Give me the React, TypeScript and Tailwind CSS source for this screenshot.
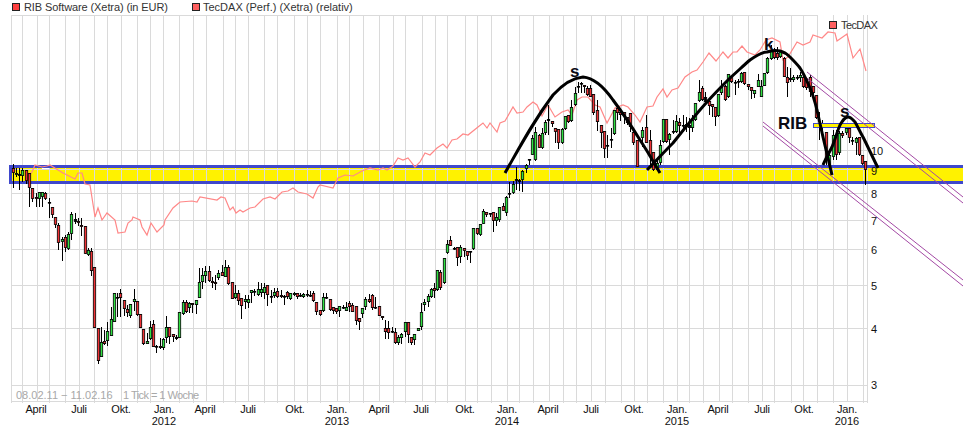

type C = [number, number, number, number, number, string];

const candles: C[] = [
  [13,168,173,164,188,"r"],[16,173,175,168,177,"g"],[19,174,176,168,190,"k"],[22,170,176,168,182,"g"],[26,170,181,170,184,"r"],[29,173,188,173,207,"r"],[32,188,199,188,202,"r"],[36,197,199,193,207,"r"],[39,192,199,192,207,"g"],[42,192,197,192,207,"g"],[45,193,199,192,200,"r"],[49,202,203,198,218,"k"],[52,207,215,207,218,"r"],[55,217,225,217,228,"r"],[58,225,243,223,250,"r"],[62,239,242,237,261,"g"],[65,237,248,235,252,"r"],[68,234,249,232,250,"g"],[71,214,234,212,240,"g"],[75,219,222,213,224,"k"],[78,221,223,218,226,"r"],[81,225,227,218,236,"r"],[85,226,254,226,254,"r"],[88,250,255,248,256,"g"],[91,251,271,248,276,"r"],[94,267,328,267,328,"r"],[98,328,361,328,364,"r"],[101,342,357,327,357,"g"],[104,341,344,330,345,"r"],[107,331,341,322,346,"g"],[111,319,336,307,336,"g"],[114,293,322,293,322,"g"],[117,297,298,293,317,"k"],[120,293,298,289,317,"r"],[124,300,309,300,316,"r"],[127,309,313,305,317,"r"],[130,304,316,304,318,"g"],[134,299,302,289,311,"g"],[137,301,315,301,316,"r"],[140,314,328,314,328,"r"],[143,329,344,329,345,"r"],[147,341,344,333,344,"g"],[150,327,339,321,340,"g"],[153,324,347,320,347,"r"],[156,346,347,345,353,"k"],[160,346,348,338,349,"r"],[163,339,348,338,350,"g"],[166,327,338,316,343,"g"],[169,327,337,327,344,"r"],[173,334,337,334,342,"r"],[176,337,339,335,340,"k"],[179,312,338,312,338,"g"],[183,302,314,300,315,"g"],[186,302,312,300,313,"r"],[189,303,308,302,313,"g"],[192,303,305,303,313,"r"],[196,300,305,300,314,"g"],[199,282,298,268,298,"g"],[202,275,282,268,289,"g"],[205,271,276,266,283,"g"],[209,271,281,266,282,"r"],[212,281,283,277,288,"r"],[215,282,284,275,290,"r"],[218,273,278,270,280,"g"],[222,272,276,265,276,"r"],[225,267,277,260,277,"g"],[228,267,284,265,285,"r"],[232,282,299,282,299,"r"],[235,293,298,285,299,"g"],[238,293,301,290,305,"r"],[241,298,306,298,319,"r"],[245,299,302,295,309,"g"],[248,299,303,295,308,"g"],[251,290,293,290,303,"g"],[254,291,292,289,296,"k"],[258,289,295,282,296,"g"],[261,289,293,283,297,"g"],[264,287,293,283,299,"g"],[267,285,295,285,306,"r"],[271,296,297,290,303,"k"],[274,292,296,288,298,"g"],[277,291,297,288,298,"r"],[281,295,297,290,298,"r"],[284,296,297,295,305,"k"],[287,292,297,291,299,"r"],[290,293,299,293,300,"g"],[294,293,295,292,296,"g"],[297,293,297,293,299,"r"],[300,295,296,293,297,"k"],[303,294,297,293,298,"g"],[307,294,295,290,297,"k"],[310,295,296,291,297,"k"],[313,293,301,291,302,"r"],[316,302,312,302,315,"r"],[320,310,315,310,316,"r"],
  [323,297,311,293,312,"g"],[326,297,298,293,299,"k"],[330,299,310,299,311,"r"],[333,307,311,307,314,"r"],[336,308,312,308,314,"r"],[339,306,311,306,317,"g"],[343,307,308,305,309,"k"],[346,307,311,302,311,"g"],[349,303,307,301,312,"r"],[352,305,312,303,312,"r"],[356,306,321,306,325,"r"],[359,318,322,318,330,"r"],[362,308,314,308,318,"g"],[365,299,307,297,310,"g"],[369,299,302,294,303,"r"],[372,295,308,294,310,"r"],[375,307,308,297,309,"k"],[379,306,316,306,316,"r"],[382,316,318,316,320,"r"],[385,328,332,320,339,"r"],[388,328,333,321,339,"r"],[392,331,332,327,333,"k"],[395,332,343,328,344,"r"],[398,337,343,335,345,"g"],[401,334,338,333,344,"g"],[405,322,332,322,337,"g"],[408,322,335,322,343,"r"],[411,337,343,337,345,"r"],[414,334,340,334,345,"g"],[418,328,331,328,331,"g"],[421,312,327,303,330,"g"],[424,302,305,299,311,"g"],[428,296,302,294,307,"g"],[431,289,297,288,298,"g"],[434,288,291,283,298,"r"],[437,270,290,270,291,"g"],[440,272,288,270,290,"r"],[444,258,283,258,284,"g"],
  [447,244,253,240,254,"g"],[450,240,246,236,246,"r"],[454,248,249,247,250,"k"],[457,247,258,247,266,"r"],[460,247,257,245,263,"g"],[464,248,251,248,257,"r"],[467,251,256,251,260,"r"],[470,251,252,251,263,"k"],[473,228,249,228,250,"g"],[477,228,234,228,235,"r"],[480,224,235,224,236,"g"],[483,211,224,209,224,"g"],[486,212,215,212,217,"r"],[490,213,214,213,217,"k"],[493,212,221,212,232,"r"],[496,217,221,213,226,"g"],[499,207,220,207,222,"g"],[503,206,211,203,211,"r"],[506,197,213,196,216,"g"],[509,193,194,182,198,"k"],[513,184,193,181,194,"g"],[516,179,181,167,190,"k"],[519,180,182,179,191,"k"],[522,171,180,170,192,"g"],[526,165,169,164,173,"g"],[529,159,160,159,165,"k"],[532,138,155,135,155,"g"],[535,132,160,127,161,"g"],[539,135,148,134,148,"r"],[542,133,148,128,149,"g"],[545,122,133,120,135,"g"],[548,119,121,105,135,"k"],[552,121,124,121,127,"r"],[555,128,132,128,143,"r"],[558,129,143,129,149,"r"],[562,129,143,128,144,"g"],[565,116,129,116,130,"g"],[568,115,122,115,123,"r"],[571,107,121,100,122,"g"],[575,93,105,87,106,"g"],[578,86,87,82,93,"k"],[581,83,84,82,93,"k"],[584,85,87,85,93,"r"],[587,88,95,86,96,"r"],[590,88,97,85,97,"r"],[593,94,113,94,115,"r"],[597,110,122,100,131,"r"],[601,125,133,125,148,"r"],[604,131,149,131,158,"r"],[607,145,146,135,158,"k"],[611,139,140,128,148,"k"],[614,110,134,110,135,"g"],[617,108,113,105,120,"r"],[620,112,115,112,121,"r"],[624,112,116,112,124,"r"],[627,117,123,117,125,"r"],[630,113,127,113,132,"r"],[633,132,143,132,145,"r"],[637,140,167,140,167,"r"],
  [642,130,138,127,147,"g"],[646,127,143,115,143,"r"],[650,140,157,130,167,"r"],[653,152,170,152,171,"r"],[657,163,170,160,171,"g"],[660,145,163,140,165,"g"],[663,119,142,119,143,"g"],[666,119,142,119,143,"r"],[669,134,140,133,155,"g"],[673,131,132,120,134,"k"],[676,121,132,115,133,"g"],[679,122,126,118,135,"r"],[683,125,126,115,132,"k"],[686,124,127,117,132,"g"],[689,125,128,118,140,"k"],[692,120,128,115,132,"g"],[695,103,120,103,121,"g"],[699,92,101,80,102,"g"],[702,88,100,86,101,"r"],[705,97,102,92,103,"k"],[709,101,106,101,115,"r"],[712,104,107,104,117,"r"],[715,107,117,107,126,"r"],[718,94,116,94,117,"g"],[721,87,93,80,95,"g"],[725,86,100,85,101,"r"],[728,74,97,74,98,"g"],[731,76,82,76,83,"r"],[735,82,83,80,95,"k"],[738,81,82,79,88,"k"],[741,73,82,72,83,"g"],[744,72,84,72,85,"r"],[748,84,87,84,90,"r"],[751,87,91,87,99,"r"],[754,90,94,90,98,"g"],[758,80,87,74,87,"g"],[761,86,97,80,97,"g"],[764,73,86,73,86,"g"],[767,58,73,57,74,"g"],[771,50,59,45,60,"g"],[774,50,58,48,59,"r"],[777,53,58,47,60,"r"],[780,50,57,50,58,"g"],[784,58,77,57,77,"r"],[787,77,83,67,97,"r"],[790,78,80,68,82,"k"],[793,77,80,75,82,"g"],[797,77,78,75,80,"k"],[800,75,78,72,82,"g"],[803,77,87,75,88,"r"],[806,78,88,78,90,"r"],[810,77,92,75,97,"r"],[813,86,93,86,100,"r"],[816,95,118,95,119,"r"],[819,123,128,112,140,"r"],[822,123,128,120,130,"r"],[826,132,160,132,165,"r"],[829,155,165,150,168,"g"],[833,135,157,130,160,"g"],[836,135,155,130,160,"r"],[839,133,153,131,155,"g"],[842,133,136,131,138,"r"],[846,128,133,123,135,"g"],[849,128,138,128,143,"r"],[852,140,141,137,145,"k"],[856,138,143,137,155,"g"],[859,137,155,137,156,"r"],[862,155,164,155,165,"r"],[865,161,170,161,185,"r"],
];

const tec =
  "29,175 32,172 35,165 42,167 47,166 50,165 58,170 63,173 67,175 75,179 78,173 82,173 85,184 90,185 95,217 98,208 102,220 107,213 115,220 118,233 125,232 128,223 132,220 133,217 140,220 142,227 147,235 151,223 157,232 164,225 165,220 173,208 180,202 192,201 197,202 200,197 217,200 221,197 225,198 230,210 233,207 236,213 240,210 243,212 250,208 255,207 263,199 270,197 275,199 282,192 288,191 293,188 298,192 307,194 313,198 318,187 320,185 333,188 338,178 345,175 353,176 362,171 370,168 378,170 383,168 387,170 393,166 398,158 403,160 408,158 415,167 420,162 425,153 430,155 437,148 443,144 447,148 452,140 457,139 463,134 468,135 478,127 483,123 487,128 490,123 497,132 500,123 505,121 513,107 517,113 523,112 527,107 533,102 537,105 542,116 548,105 555,117 562,112 568,110 572,115 577,100 582,97 588,97 595,105 600,107 607,123 615,108 623,105 628,107 635,115 640,122 647,107 653,106 657,97 663,89 667,97 672,90 678,88 685,77 692,72 697,70 703,62 709,53 716,61 723,52 728,58 733,52 737,52 742,46 747,52 755,55 760,50 766,40 772,38 780,42 783,60 788,57 797,42 803,45 810,42 813,35 822,38 828,32 835,33 837,41 847,34 853,58 860,49 866,71";

const gridX = [11,22,37,49,65,79,94,107,121,137,150,163,179,193,206,223,235,248,264,277,294,307,320,337,349,363,379,393,405,422,435,447,465,477,491,507,519,533,549,563,576,591,605,621,634,647,663,677,689,703,719,732,748,762,774,791,803,817,833,847,863,867];
const labelled = [37,79,121,163,206,248,294,337,379,422,465,507,549,591,634,677,719,762,803,847];
const gridY = [15,150,169,193,220,249,285,328,385,401];

const months: [number, string][] = [[36,"April"],[79,"Juli"],[121,"Okt."],[164,"Jan."],[205,"April"],[248,"Juli"],[295,"Okt."],[337,"Jan."],[379,"April"],[421,"Juli"],[465,"Okt."],[507,"Jan."],[548,"April"],[591,"Juli"],[634,"Okt."],[677,"Jan."],[718,"April"],[762,"Juli"],[804,"Okt."],[847,"Jan."]];
const years: [number, string][] = [[164,"2012"],[337,"2013"],[507,"2014"],[677,"2015"],[847,"2016"]];
const prices: [number, string][] = [[155,"10"],[175,"9"],[198,"8"],[225,"7"],[254,"6"],[290,"5"],[333,"4"],[389,"3"]];

const arches = [
  "M505 173 C522 143 533 122 553 95 C563 84 572 78 583 77 C596 78 606 90 613 100 C622 112 632 127 640 140 C648 152 654 163 660 173",
  "M647 170 C655 162 664 152 673 143 C685 128 696 114 707 102 C715 93 722 86 730 78 C738 71 744 65 750 60 C757 55 762 52 767 52 C772 50 776 50 780 51 C784 52 787 54 790 57 C794 61 797 64 800 68 C804 74 807 81 810 88 C813 95 815 102 817 110 C819 119 821 128 823 137 C826 150 829 162 832 175",
  "M823 165 C826 158 829 153 832 147 C835 140 837 132 840 125 C843 120 845 117 848 117 C851 117 853 120 855 122 C858 127 860 132 863 137 C868 147 873 158 878 168",
];

function Candle({ c }: { c: C }) {
  const [x, t, b, wt, wb, k] = c;
  const cx = Math.floor(x) + 0.5;
  const fill = k === "r" ? "#f03236" : k === "g" ? "#2fe042" : "#000000";
  return (
    <g>
      <line x1={cx} x2={cx} y1={wt} y2={wb} stroke="#000" strokeWidth={1} shapeRendering="crispEdges" />
      <rect x={cx - 1.2} y={t + 0.4} width={2.4} height={Math.max(b - t - 0.8, 0.8)} fill={fill} stroke="#000" strokeWidth={0.8} />
    </g>
  );
}

export default function App() {
  return (
    <div className="w-[963px] h-[437px] bg-white overflow-hidden font-['Liberation_Sans',Arial,sans-serif]">
      <div className="h-[15px] flex items-start text-[11px] leading-[14px] text-[#333333]">
        <div className="flex items-center gap-[4px] ml-[12px] w-[180px]">
          <span className="w-[8px] h-[8px] bg-[#ff4040] border border-[#222222]" />
          <span className="tracking-[-0.1px]">RIB Software (Xetra) (in EUR)</span>
        </div>
        <div className="flex items-center gap-[3px]">
          <span className="w-[8px] h-[8px] bg-[#ff6060] border border-[#222222]" />
          <span>TecDAX (Perf.) (Xetra) (relativ)</span>
        </div>
      </div>
      <svg width={963} height={422} viewBox="0 15 963 422" className="block">
        <rect x={12} y={168} width={951} height={13} fill="#fff200" />
        <rect x={42} y={168} width={7} height={2} fill="#ffffff" />
        <g shapeRendering="crispEdges" stroke="#dadada" strokeWidth={1}>
          {gridX.map((x) => (
            <line key={x} x1={x + 0.5} x2={x + 0.5} y1={15} y2={labelled.includes(x) ? 401 : 403} />
          ))}
          {gridY.map((y) => (
            <line key={y} x1={11} x2={y === 15 ? 818 : 867} y1={y + 0.5} y2={y + 0.5} />
          ))}
        </g>
        <g shapeRendering="crispEdges" fill="#3f48cc">
          <rect x={9} y={165} width={954} height={3} />
          <rect x={9} y={181} width={954} height={3} />
          <rect x={9} y={165} width={3} height={19} />
        </g>
        <polyline points={tec} fill="none" stroke="#ff8888" strokeWidth={1.2} />
        <g>
          {candles.map((c, i) => (
            <Candle key={i} c={c} />
          ))}
        </g>
        <rect x={813.5} y={123.5} width={61} height={4} fill="#fff200" stroke="#3f48cc" strokeWidth={1} shapeRendering="crispEdges" />
        <g fill="none" stroke="#a349a4" strokeWidth={1}>
          <line x1={807} y1={72} x2={963} y2={197} />
          <line x1={803} y1={75} x2={963} y2={203} />
          <line x1={763} y1={122} x2={963} y2={280} />
          <line x1={763} y1={126} x2={963} y2={286} />
        </g>
        <g fill="none" stroke="#000" strokeWidth={3} strokeLinecap="butt">
          {arches.map((d) => (
            <path key={d} d={d} />
          ))}
        </g>
        <g fontSize={11} fill="#111111">
          {months.map(([x, t], i) => (
            <text key={i} x={x} y={413} textAnchor="middle" letterSpacing={-0.2}>{t}</text>
          ))}
          {years.map(([x, t]) => (
            <text key={t} x={x} y={425} textAnchor="middle">{t}</text>
          ))}
          {prices.map(([y, t]) => (
            <text key={t} x={871} y={y}>{t}</text>
          ))}
        </g>
        <text x={16} y={399} fontSize={11} fill="#a8a8a8">08.02.11 − 11.02.16</text>
        <text x={123} y={399} fontSize={11} fill="#a8a8a8" letterSpacing={-0.55}>1 Tick = 1 Woche</text>
        <rect x={829.5} y={21.5} width={7} height={7} fill="#ff6060" stroke="#222222" strokeWidth={1} shapeRendering="crispEdges" />
        <text x={841} y={29} fontSize={11} fill="#333333" letterSpacing={-0.6}>TecDAX</text>
        <g fill="#0a0a14" fontWeight={700}>
          <text x={778} y={129} fontSize={17}>RIB</text>
          <text x={570} y={77} fontSize={17}>s</text>
          <text x={840} y={117} fontSize={17}>s</text>
          <text x={764} y={50} fontSize={17}>k</text>
        </g>
      </svg>
    </div>
  );
}
